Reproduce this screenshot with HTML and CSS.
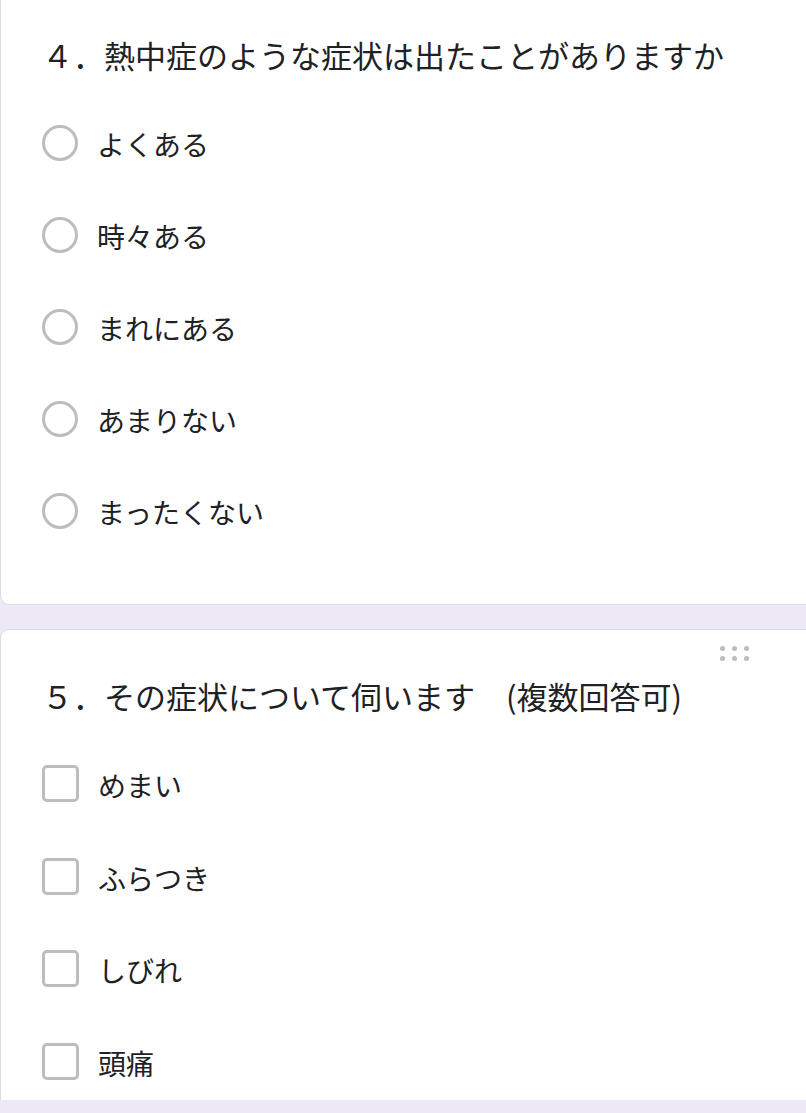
FILE: index.html
```html
<!DOCTYPE html>
<html lang="ja">
<head>
<meta charset="utf-8">
<title>アンケート</title>
<link rel="stylesheet" href="styles.css">
</head>
<body>
<main class="form">
  <section class="card card-first">
    <h2 class="q-title">４．熱中症のような症状は出たことがありますか</h2>
    <ul class="choices">
      <li class="choice"><span class="radio"></span><span class="label">よくある</span></li>
      <li class="choice"><span class="radio"></span><span class="label">時々ある</span></li>
      <li class="choice"><span class="radio"></span><span class="label">まれにある</span></li>
      <li class="choice"><span class="radio"></span><span class="label">あまりない</span></li>
      <li class="choice"><span class="radio"></span><span class="label">まったくない</span></li>
    </ul>
  </section>
  <section class="card card-second">
    <div class="drag-handle" aria-hidden="true">
      <span class="dot"></span><span class="dot"></span><span class="dot"></span>
      <span class="dot"></span><span class="dot"></span><span class="dot"></span>
    </div>
    <h2 class="q-title q-title-second">５．その症状について伺います　(複数回答可)</h2>
    <ul class="choices">
      <li class="choice"><span class="checkbox"></span><span class="label">めまい</span></li>
      <li class="choice"><span class="checkbox"></span><span class="label">ふらつき</span></li>
      <li class="choice"><span class="checkbox"></span><span class="label">しびれ</span></li>
      <li class="choice"><span class="checkbox"></span><span class="label">頭痛</span></li>
    </ul>
  </section>
</main>
<div class="bottom-band"></div>
</body>
</html>
```
FILE: styles.css
```css
html, body {
  margin: 0;
  padding: 0;
}
body {
  background: #ede9f7;
  overflow: hidden;
  font-family: "Noto Sans CJK JP", "Noto Sans", sans-serif;
  color: #202124;
}
.form {
  display: flex;
  flex-direction: column;
  gap: 24px;
  margin-top: -14px;
}
.card {
  width: 100%;
  background: #ffffff;
  border: 1px solid #dadce0;
  border-right: none;
  border-radius: 9px 0 0 9px;
  box-sizing: border-box;
}
.card-first {
  padding: 48px 0 46px 0;
}
.card-second {
  padding: 16px 0 0 0;
}
.q-title {
  margin: 0 0 23px 0;
  padding-left: 41px;
  font-size: 31px;
  font-weight: 400;
  line-height: 40px;
  white-space: nowrap;
}
.q-title-second {
  margin-top: 15px;
}
.choices {
  list-style: none;
  margin: 0;
  padding: 0;
}
.choice {
  display: flex;
  align-items: center;
  gap: 19px;
  height: 92.5px;
  padding-left: 41px;
}
.card-first .choice {
  height: 92px;
}
.radio {
  width: 36px;
  height: 36px;
  box-sizing: border-box;
  border: 3.5px solid #bdbdbd;
  border-radius: 50%;
  flex: none;
  margin-top: -3px;
}
.checkbox {
  width: 37px;
  height: 37px;
  box-sizing: border-box;
  border: 3.5px solid #bdbdbd;
  border-radius: 5px;
  flex: none;
  margin-top: -3px;
}
.label {
  font-size: 28px;
  line-height: 36px;
}
.drag-handle {
  display: grid;
  grid-template-columns: repeat(3, 5px);
  grid-auto-rows: 5px;
  column-gap: 7px;
  row-gap: 5px;
  justify-content: end;
  padding-right: 57px;
}
.dot {
  width: 5px;
  height: 5px;
  border-radius: 50%;
  background: #bdbdbd;
}
.bottom-band {
  position: fixed;
  left: 0;
  right: 0;
  bottom: 0;
  height: 13px;
  background: #ede9f7;
}
```
